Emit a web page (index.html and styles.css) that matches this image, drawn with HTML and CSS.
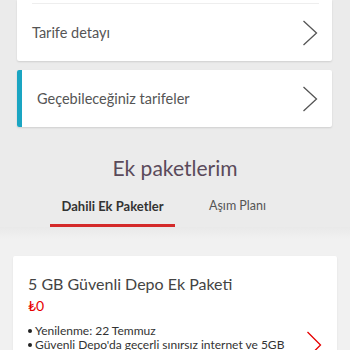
FILE: index.html
```html
<!DOCTYPE html>
<html lang="tr">
<head>
<meta charset="utf-8">
<link rel="stylesheet" href="styles.css">
</head>
<body>
<div class="card top-card">
  <div class="sep"></div>
  <div class="row">
    <span class="row-label">Tarife detayı</span>
    <svg class="chev" width="16" height="26" viewBox="0 0 16 26"><path d="M1.5 1 L14.5 13 L1.5 25" fill="none" stroke="#555" stroke-width="1.3"/></svg>
  </div>
</div>
<div class="card accent-card">
  <div class="row row-accent">
    <span class="row-label">Geçebileceğiniz tarifeler</span>
    <svg class="chev" width="16" height="26" viewBox="0 0 16 26"><path d="M1.5 1 L14.5 13 L1.5 25" fill="none" stroke="#555" stroke-width="1.3"/></svg>
  </div>
</div>
<h2 class="section-title">Ek paketlerim</h2>
<div class="tabs">
  <div class="tab active">Dahili Ek Paketler</div>
  <div class="tab">Aşım Planı</div>
</div>
<div class="lower">
  <div class="pkg-card">
    <div class="pkg-title">5 GB Güvenli Depo Ek Paketi</div>
    <div class="pkg-price">₺0</div>
    <div class="pkg-body">
      <ul class="pkg-list">
        <li>Yenilenme: 22 Temmuz</li>
        <li>Güvenli Depo'da geçerli sınırsız internet ve 5GB</li>
      </ul>
      <svg class="chev-red" width="16" height="28" viewBox="0 0 16 28"><path d="M1.5 1 L14.5 14 L1.5 27" fill="none" stroke="#e60000" stroke-width="1.3"/></svg>
    </div>
  </div>
</div>
</body>
</html>
```
FILE: styles.css
```css
html, body {
  margin: 0;
  padding: 0;
  background: #ebebeb;
  font-family: Lato, "Noto Sans", sans-serif;
  color: #4a4a4a;
  overflow: hidden;
}
.card {
  background: #fff;
  margin: 0 18px 0 17px;
  box-shadow: 0 1px 2px rgba(0,0,0,0.12);
  border-radius: 2px;
}
.top-card {
  padding-top: 3px;
  border-radius: 0 0 2px 2px;
}
.sep {
  height: 1px;
  background: #eeeeee;
  margin: 0 13px 0 15px;
}
.accent-card {
  margin-top: 9px;
  overflow: hidden;
}
.row {
  display: flex;
  align-items: center;
  justify-content: space-between;
  height: 57px;
  padding: 0 14px 0 15px;
}
.row-accent {
  border-left: 5px solid #1aa5c2;
  padding-left: 15px;
  height: 57px;
}
.row-label {
  font-size: 14.5px;
  color: #555555;
}
.chev { display: block; }
.section-title {
  margin: 28px 0 0;
  text-align: center;
  font-weight: 400;
  font-size: 21px;
  color: #5a4a5a;
  line-height: 26px;
}
.tabs {
  display: flex;
  margin: 17px 0 0 50px;
  width: 250px;
}
.tab {
  flex: 1;
  text-align: center;
  font-size: 13px;
  color: #555;
  padding-bottom: 10px;
  border-bottom: 3px solid transparent;
  line-height: 16px;
}
.tab.active {
  font-weight: 700;
  color: #333;
  border-bottom-color: #d42a2a;
}
.tab + .tab { font-size: 12.5px; }
.lower {
  background: linear-gradient(#e9e9e9, #f1f1f1 12px, #f1f1f1);
  padding: 29px 13px 0 13px;
  height: 200px;
}
.pkg-card {
  background: #fff;
  padding: 17px 15px 10px 15px;
  box-shadow: 0 1px 2px rgba(0,0,0,0.08);
  border-radius: 2px;
}
.pkg-title {
  font-size: 16px;
  color: #444;
  line-height: 22px;
}
.pkg-price {
  color: #e60000;
  font-size: 14px;
  line-height: 18px;
  margin-top: 2px;
}
.pkg-body {
  display: flex;
  align-items: flex-start;
  justify-content: space-between;
  margin-top: 9px;
}
.pkg-list {
  list-style: none;
  margin: 0;
  padding: 0;
  font-size: 12px;
  color: #333;
  line-height: 14px;
  white-space: nowrap;
}
.pkg-list li::before {
  content: "";
  display: inline-block;
  width: 4px;
  height: 4px;
  background: #222;
  border-radius: 50%;
  margin: 0 3px 2px 0;
}
.chev-red {
  display: block;
  margin-top: 7px;
  margin-right: 0;
  flex-shrink: 0;
}
```
